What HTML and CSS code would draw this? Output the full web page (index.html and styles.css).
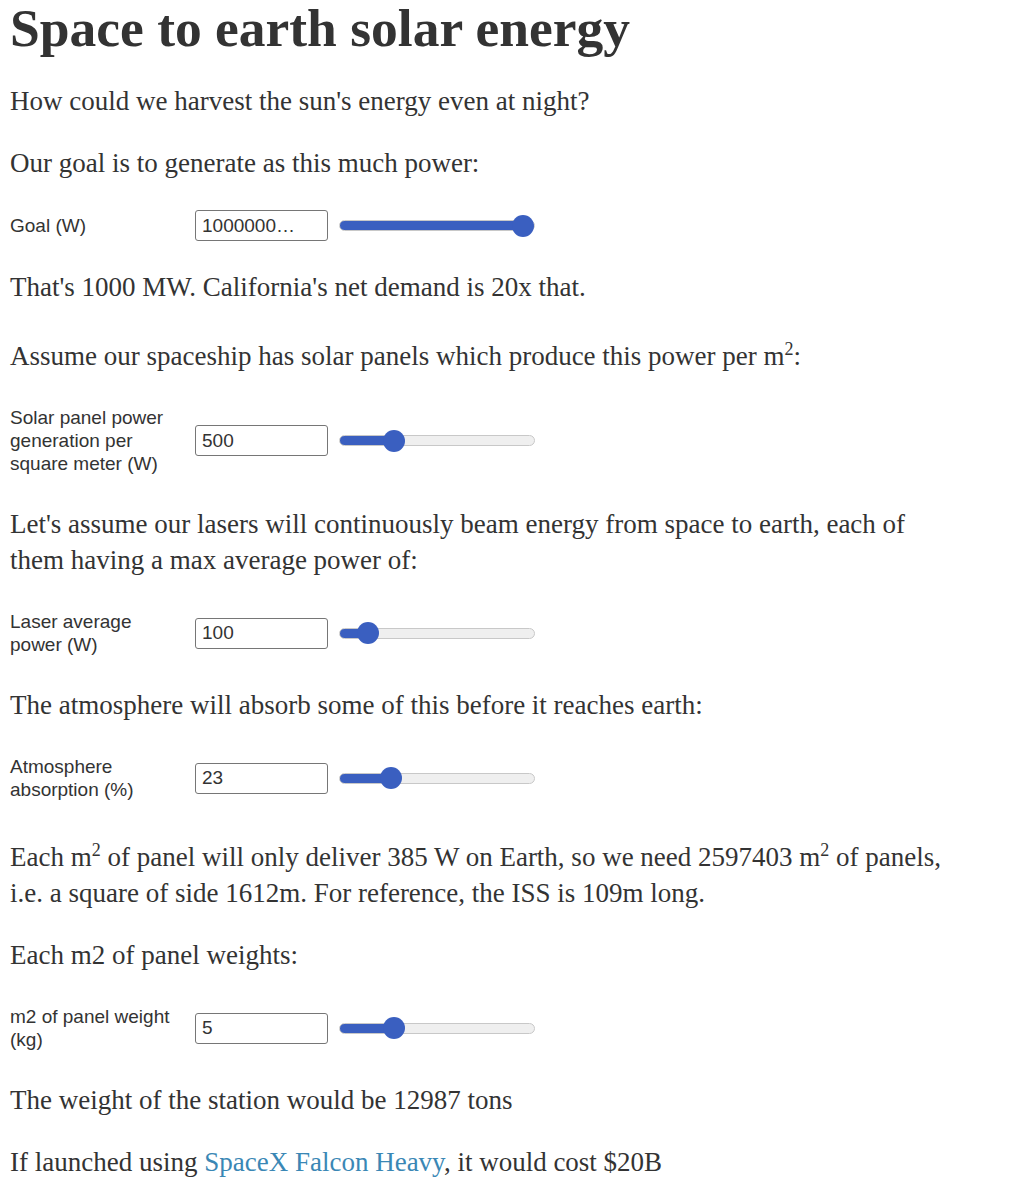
FILE: index.html
```html
<!DOCTYPE html>
<html>
<head>
<meta charset="utf-8">
<link rel="stylesheet" href="styles.css">
</head>
<body>
<main class="page">
  <h1 class="title">Space to earth solar energy</h1>
  <p class="text">How could we harvest the sun's energy even at night?</p>
  <p class="text">Our goal is to generate as this much power:</p>
  <div class="row">
    <label class="label">Goal (W)</label>
    <input class="num" type="text" value="1000000…">
    <input class="range" type="range" min="0" max="100" value="100" style="--p: 1">
  </div>
  <p class="text">That's 1000 MW. California's net demand is 20x that.</p>
  <p class="text">Assume our spaceship has solar panels which produce this power per m<sup>2</sup>:</p>
  <div class="row">
    <label class="label">Solar panel power generation per square meter (W)</label>
    <input class="num" type="text" value="500">
    <input class="range" type="range" min="0" max="2000" value="500" style="--p: 0.25">
  </div>
  <p class="text">Let's assume our lasers will continuously beam energy from space to earth, each of them having a max average power of:</p>
  <div class="row">
    <label class="label">Laser average power (W)</label>
    <input class="num" type="text" value="100">
    <input class="range" type="range" min="0" max="1000" value="100" style="--p: 0.1">
  </div>
  <p class="text">The atmosphere will absorb some of this before it reaches earth:</p>
  <div class="row">
    <label class="label">Atmosphere absorption (%)</label>
    <input class="num" type="text" value="23">
    <input class="range" type="range" min="0" max="100" value="23" style="--p: 0.23">
  </div>
  <p class="text">Each m<sup>2</sup> of panel will only deliver 385 W on Earth, so we need 2597403 m<sup>2</sup> of panels, i.e. a square of side 1612m. For reference, the ISS is 109m long.</p>
  <p class="text">Each m2 of panel weights:</p>
  <div class="row">
    <label class="label">m2 of panel weight (kg)</label>
    <input class="num" type="text" value="5">
    <input class="range" type="range" min="0" max="20" value="5" style="--p: 0.25">
  </div>
  <p class="text">The weight of the station would be 12987 tons</p>
  <p class="text">If launched using <a class="link" href="#">SpaceX Falcon Heavy</a>, it would cost $20B</p>
</main>
</body>
</html>
```

FILE: styles.css
```css
html, body {
  margin: 0;
  padding: 0;
  background: #fff;
}
.page {
  display: flex;
  flex-direction: column;
  gap: 26px;
  padding: 0 10px;
  width: 950px;
  color: #333;
  font-family: "Liberation Serif", "DejaVu Serif", serif;
}
.title {
  margin: 0 0 1px 0;
  font-size: 53.5px;
  line-height: 56px;
  font-weight: bold;
  color: #333;
}
.text {
  margin: 0;
  font-size: 27px;
  line-height: 36px;
}
.text sup {
  font-size: 18px;
}
.link {
  color: #3a87b5;
  text-decoration: none;
}
.row {
  display: flex;
  align-items: center;
  margin: 3px 0 2px;
}
.label {
  width: 172px;
  margin-right: 13px;
  padding: 3px 0;
  font-family: "Liberation Sans", Arial, sans-serif;
  font-size: 19px;
  line-height: 23px;
  color: #333;
}
.num {
  box-sizing: border-box;
  width: 133px;
  height: 31px;
  margin: 0;
  padding: 0 6px;
  border: 1px solid #767676;
  border-radius: 3px;
  font-family: "Liberation Sans", Arial, sans-serif;
  font-size: 19px;
  color: #333;
  background: #fff;
}
.range {
  -webkit-appearance: none;
  appearance: none;
  width: 196px;
  height: 22px;
  margin: 0 0 0 11px;
  background: transparent;
}
.range::-webkit-slider-runnable-track {
  height: 11px;
  border-radius: 6px;
  border: 1px solid #c8c8c8;
  box-sizing: border-box;
  background: linear-gradient(to right, #3a5fc0 calc(11px + (100% - 22px) * var(--p)), #efefef calc(11px + (100% - 22px) * var(--p)));
}
.range::-webkit-slider-thumb {
  -webkit-appearance: none;
  width: 22px;
  height: 22px;
  margin-top: -6.5px;
  border-radius: 50%;
  background: #3a5fc0;
  border: none;
}
```
